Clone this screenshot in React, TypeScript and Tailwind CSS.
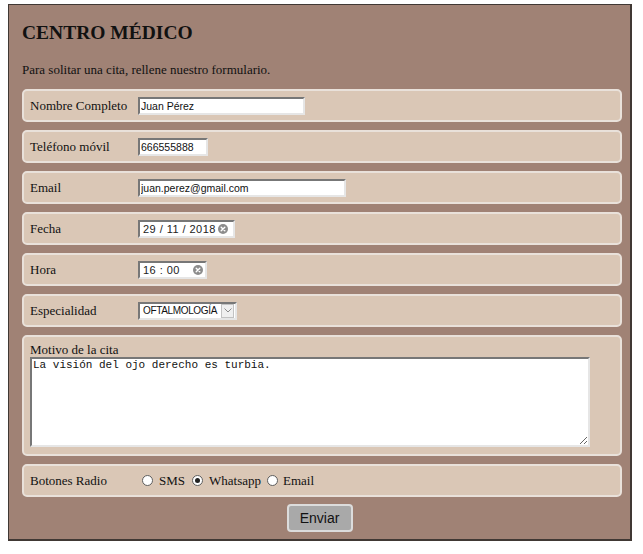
import React from 'react';

const serif = { fontFamily: '"Liberation Serif", "Times New Roman", serif' };

interface RowProps {
    label: string;
    children: React.ReactNode;
}

function Row({ label, children }: RowProps) {
    return (
        <div className="flex h-[33px] items-center rounded-[5px] border-2 border-[#e9e1da] bg-[#dac7b6] pl-[6px]">
            <span className="w-[108px] shrink-0 text-[13px] leading-[13px] text-[#111]">{label}</span>
            {children}
        </div>
    );
}

function ClearIcon() {
    return (
        <svg width="10" height="10" viewBox="0 0 10 10" className="shrink-0">
            <circle cx="5" cy="5" r="5" fill="#8c8c8c" />
            <path d="M3.2 3.2 L6.8 6.8 M6.8 3.2 L3.2 6.8" stroke="#fff" strokeWidth="1.4" strokeLinecap="round" />
        </svg>
    );
}

const fieldBox = 'h-[18px] border-2 border-t-[#777] border-l-[#777] border-r-[#e6e6e6] border-b-[#e6e6e6] bg-white';
const sans = { fontFamily: '"Liberation Sans", Arial, sans-serif' };

function TextField({ value, width }: { value: string; width: string }) {
    return (
        <input
            type="text"
            readOnly
            value={value}
            style={sans}
            className={`${fieldBox} ${width} px-[1px] text-[10.5px] leading-[14px] text-[#111] outline-none`}
        />
    );
}

function Radio({ checked }: { checked?: boolean }) {
    return (
        <span className="flex h-[11px] w-[11px] shrink-0 items-center justify-center rounded-full border border-[#5e5e5e] bg-white">
            {checked && <span className="h-[5px] w-[5px] rounded-full bg-[#222]" />}
        </span>
    );
}

export default function App() {
    return (
        <div className="min-h-[554px] bg-white pl-[8px] pt-[4px]" style={serif}>
            <div className="w-[624px] border border-r-2 border-b-2 border-[#403834] bg-[#a08275] pl-[13px] pr-[8px] pt-[18px] pb-[7px]">
                <h1 className="text-[19.5px] font-bold leading-[20px] text-[#111]">CENTRO MÉDICO</h1>
                <p className="mt-[20px] text-[13px] leading-[13px] text-[#111]">
                    Para solitar una cita, rellene nuestro formulario.
                </p>

                <div className="mt-[13px] flex flex-col gap-[8px]">
                    <Row label="Nombre Completo">
                        <TextField value="Juan Pérez" width="w-[167px]" />
                    </Row>
                    <Row label="Teléfono móvil">
                        <TextField value="666555888" width="w-[70px]" />
                    </Row>
                    <Row label="Email">
                        <TextField value="juan.perez@gmail.com" width="w-[208px]" />
                    </Row>
                    <Row label="Fecha">
                        <div className={`${fieldBox} flex w-[97px] items-center gap-[2px] pl-[3px]`} style={sans}>
                            <span className="text-[11px] leading-[14px] tracking-[0.45px] text-[#222]">29 / 11 / 2018</span>
                            <ClearIcon />
                        </div>
                    </Row>
                    <Row label="Hora">
                        <div className={`${fieldBox} flex w-[69px] items-center pl-[3px]`} style={sans}>
                            <span className="w-[50px] text-[11px] leading-[14px] tracking-[0.45px] text-[#222]">16 : 00</span>
                            <ClearIcon />
                        </div>
                    </Row>
                    <Row label="Especialidad">
                        <div className={`${fieldBox} flex w-[99px] items-center justify-between pl-[3px] pr-[1px]`} style={sans}>
                            <span className="whitespace-nowrap text-[10px] leading-[14px] tracking-[-0.35px] text-[#111]">OFTALMOLOGÍA</span>
                            <span className="flex h-[14px] w-[13px] shrink-0 items-center justify-center border border-[#c2c2c2] bg-[#efefef]">
                                <svg width="8" height="5" viewBox="0 0 8 5">
                                    <path d="M0.5 0.5 L4 4 L7.5 0.5" fill="none" stroke="#8a8a8a" strokeWidth="1" />
                                </svg>
                            </span>
                        </div>
                    </Row>

                    <div className="h-[121px] rounded-[5px] border-2 border-[#e9e1da] bg-[#dac7b6] pl-[6px] pt-[5px]">
                        <div className="text-[13px] leading-[15px] text-[#111]">Motivo de la cita</div>
                        <textarea
                            readOnly
                            value="La visión del ojo derecho es turbia."
                            className="block h-[90px] w-[560px] border-2 border-t-[#777] border-l-[#777] border-r-[#e6e6e6] border-b-[#e6e6e6] bg-white px-[1px] text-[11px] leading-[13px] text-[#111] outline-none"
                            style={{ fontFamily: '"Liberation Mono", "Courier New", monospace' }}
                        />
                    </div>

                    <div className="flex h-[33px] items-center rounded-[5px] border-2 border-[#e9e1da] bg-[#dac7b6] pl-[6px] text-[13px] leading-[13px] text-[#111]">
                        <span className="w-[112px] shrink-0">Botones Radio</span>
                        <Radio />
                        <span className="ml-[6px]">SMS</span>
                        <span className="ml-[7px]"><Radio checked /></span>
                        <span className="ml-[6px]">Whatsapp</span>
                        <span className="ml-[6px]"><Radio /></span>
                        <span className="ml-[5px]">Email</span>
                    </div>
                </div>

                <div className="mt-[7px] flex justify-center pr-[5px]">
                    <button
                        type="button"
                        className="h-[28px] w-[66px] rounded-[4px] border-2 border-[#dcdcdc] bg-[#a9a9a9] text-[14px] text-[#111]"
                        style={sans}
                    >
                        Enviar
                    </button>
                </div>
            </div>
        </div>
    );
}
